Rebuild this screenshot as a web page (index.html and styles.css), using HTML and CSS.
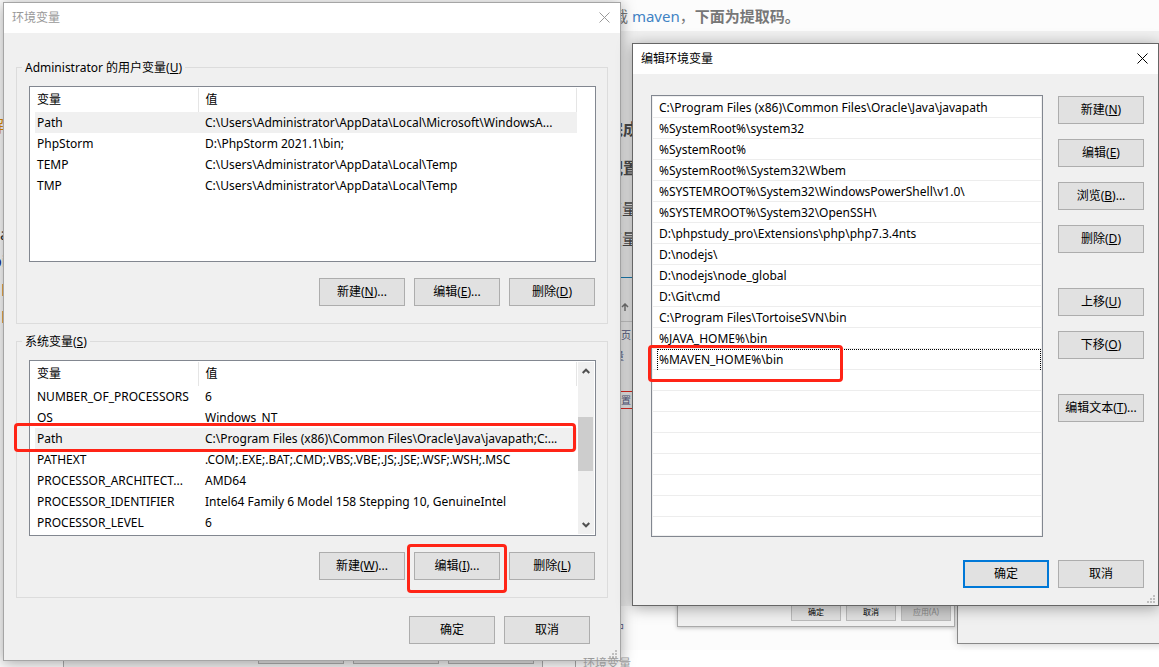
FILE: index.html
```html
<!DOCTYPE html>
<html lang="zh-CN">
<head>
    <meta charset="UTF-8">
    <meta name="viewport" content="width=device-width, initial-scale=1.0">
    <title>环境变量</title>
    <link rel="stylesheet" href="styles.css">
</head>
<body>

<div class="desktop">

    <!-- page behind the dialogs -->
    <div class="article">
        <p class="article-line intro">下载 <a href="#">maven</a>，<strong>下面为提取码。</strong></p>
        <div class="article-image"></div>
        <h3 class="article-line step-done">完成</h3>
        <h3 class="article-line step-config">配置</h3>
        <p class="article-line var-one">变量</p>
        <p class="article-line var-two">变量</p>
        <div class="shot-pane"></div>
        <svg class="shot-arrow" viewBox="0 0 8 8"><path d="M4 8V1M1 4l3-3 3 3" fill="none" stroke="#777" stroke-width="1.5"/></svg>
        <span class="article-line shot-text shot-home">主页</span>
        <span class="article-line shot-text shot-mark">量</span>
        <span class="article-line shot-text shot-setting">设置</span>
        <span class="article-line shot-text shot-tail">中</span>
        <span class="article-line left-note">解</span>
        <span class="article-line left-a">a</span>
        <span class="article-line left-bi">bi</span>
        <span class="article-line left-p1">P</span>
        <span class="article-line left-p2">P</span>
        <span class="article-line caption">环境变量</span>
        <div class="article-rule"></div>
    </div>

    <div class="back-window back-left"><i></i><i></i><i></i></div>
    <div class="back-window back-right"></div>
    <div class="back-window back-small">
        <button>确定</button>
        <button>取消</button>
        <button disabled>应用(A)</button>
    </div>

    <!-- 环境变量 -->
    <div class="dialog dialog-vars">
        <div class="title-bar">
            <span>环境变量</span>
            <button class="close" aria-label="关闭">
                <svg viewBox="0 0 11 11"><path d="M.5 .5l10 10M10.5 .5l-10 10"/></svg>
            </button>
        </div>
        <div class="dialog-body">
            <fieldset>
                <legend>Administrator 的用户变量(<u>U</u>)</legend>
                <div class="list-view">
                    <table>
                        <thead>
                            <tr><th class="col-name">变量</th><th>值</th></tr>
                        </thead>
                        <tbody>
                            <tr class="selected"><td>Path</td><td>C:\Users\Administrator\AppData\Local\Microsoft\WindowsA...</td></tr>
                            <tr><td>PhpStorm</td><td>D:\PhpStorm 2021.1\bin;</td></tr>
                            <tr><td>TEMP</td><td>C:\Users\Administrator\AppData\Local\Temp</td></tr>
                            <tr><td>TMP</td><td>C:\Users\Administrator\AppData\Local\Temp</td></tr>
                        </tbody>
                    </table>
                </div>
                <div class="button-row">
                    <button class="btn">新建(<u>N</u>)...</button>
                    <button class="btn">编辑(<u>E</u>)...</button>
                    <button class="btn">删除(<u>D</u>)</button>
                </div>
            </fieldset>

            <fieldset>
                <legend>系统变量(<u>S</u>)</legend>
                <div class="list-view">
                    <table>
                        <thead>
                            <tr><th class="col-name">变量</th><th>值</th></tr>
                        </thead>
                        <tbody>
                            <tr><td>NUMBER_OF_PROCESSORS</td><td>6</td></tr>
                            <tr><td>OS</td><td>Windows_NT</td></tr>
                            <tr class="selected"><td>Path</td><td>C:\Program Files (x86)\Common Files\Oracle\Java\javapath;C:...</td></tr>
                            <tr><td>PATHEXT</td><td>.COM;.EXE;.BAT;.CMD;.VBS;.VBE;.JS;.JSE;.WSF;.WSH;.MSC</td></tr>
                            <tr><td>PROCESSOR_ARCHITECT...</td><td>AMD64</td></tr>
                            <tr><td>PROCESSOR_IDENTIFIER</td><td>Intel64 Family 6 Model 158 Stepping 10, GenuineIntel</td></tr>
                            <tr><td>PROCESSOR_LEVEL</td><td>6</td></tr>
                        </tbody>
                    </table>
                    <div class="scrollbar">
                        <svg viewBox="0 0 8 6"><path d="M.7 5L4 1.7 7.3 5"/></svg>
                        <div class="thumb"></div>
                        <svg viewBox="0 0 8 6"><path d="M.7 1L4 4.3 7.3 1"/></svg>
                    </div>
                    <div class="mark mark-path"></div>
                </div>
                <div class="button-row">
                    <button class="btn">新建(<u>W</u>)...</button>
                    <div class="marked">
                        <button class="btn">编辑(<u>I</u>)...</button>
                        <div class="mark mark-edit"></div>
                    </div>
                    <button class="btn">删除(<u>L</u>)</button>
                </div>
            </fieldset>

            <div class="dialog-footer">
                <button class="btn">确定</button>
                <button class="btn">取消</button>
            </div>
        </div>
        <svg class="grip" viewBox="0 0 8 8"><path d="M6 0h2v2h-2zM3 3h2v2h-2zM6 3h2v2h-2zM0 6h2v2h-2zM3 6h2v2h-2zM6 6h2v2h-2z"/></svg>
    </div>

    <!-- 编辑环境变量 -->
    <div class="dialog dialog-edit">
        <div class="title-bar">
            <span>编辑环境变量</span>
            <button class="close" aria-label="关闭">
                <svg viewBox="0 0 11 11"><path d="M.5 .5l10 10M10.5 .5l-10 10"/></svg>
            </button>
        </div>
        <div class="dialog-body">
            <div class="edit-area">
                <ul class="path-list">
                    <li>C:\Program Files (x86)\Common Files\Oracle\Java\javapath</li>
                    <li>%SystemRoot%\system32</li>
                    <li>%SystemRoot%</li>
                    <li>%SystemRoot%\System32\Wbem</li>
                    <li>%SYSTEMROOT%\System32\WindowsPowerShell\v1.0\</li>
                    <li>%SYSTEMROOT%\System32\OpenSSH\</li>
                    <li>D:\phpstudy_pro\Extensions\php\php7.3.4nts</li>
                    <li>D:\nodejs\</li>
                    <li>D:\nodejs\node_global</li>
                    <li>D:\Git\cmd</li>
                    <li>C:\Program Files\TortoiseSVN\bin</li>
                    <li>%JAVA_HOME%\bin</li>
                    <li class="focused">%MAVEN_HOME%\bin<div class="mark mark-maven"></div></li>
                </ul>
                <div class="side-buttons">
                    <div class="side-group">
                        <button class="btn">新建(<u>N</u>)</button>
                        <button class="btn">编辑(<u>E</u>)</button>
                        <button class="btn">浏览(<u>B</u>)...</button>
                        <button class="btn">删除(<u>D</u>)</button>
                    </div>
                    <div class="side-group">
                        <button class="btn">上移(<u>U</u>)</button>
                        <button class="btn">下移(<u>O</u>)</button>
                    </div>
                    <div class="side-group">
                        <button class="btn">编辑文本(<u>T</u>)...</button>
                    </div>
                </div>
            </div>
            <div class="dialog-footer">
                <button class="btn btn-default">确定</button>
                <button class="btn">取消</button>
            </div>
        </div>
        <svg class="grip" viewBox="0 0 8 8"><path d="M6 0h2v2h-2zM3 3h2v2h-2zM6 3h2v2h-2zM0 6h2v2h-2zM3 6h2v2h-2zM6 6h2v2h-2z"/></svg>
    </div>

</div>

</body>
</html>
```
FILE: styles.css
```css
* {
    box-sizing: border-box;
}

body {
    margin: 0;
    font-family: "Noto Sans", "Noto Sans CJK SC", sans-serif;
    font-size: 12px;
    line-height: 20px;
    color: #000;
}

button {
    font: inherit;
    color: inherit;
    padding: 0;
}

.desktop {
    position: relative;
    height: 100vh;
    min-height: 667px;
    overflow: hidden;
    background: #fcfcfc;
}

/* page in the background */
.article-line {
    position: absolute;
    margin: 0;
    font-size: 16px;
    line-height: 24px;
    white-space: nowrap;
    color: #4d4d4d;
}

.intro {
    left: 598px;
    top: 4px;
    font-size: 15px;
    color: #777;
}

.intro a {
    color: #4183c4;
    text-decoration: none;
}

.article-image {
    position: absolute;
    left: 560px;
    right: 0;
    top: 31px;
    height: 575px;
    background: #f0f0f0;
}

.step-done,
.step-config {
    left: 607px;
}

.step-done {
    top: 117px;
}

.step-config {
    top: 156px;
}

.var-one,
.var-two {
    left: 606px;
}

.var-one {
    top: 197px;
}

.var-two {
    top: 227px;
}

.shot-pane {
    position: absolute;
    left: 600px;
    width: 50px;
    top: 277px;
    height: 45px;
    border-top: 1px solid #1a7fb5;
    border-bottom: 1px solid #ccc;
}

.shot-arrow {
    position: absolute;
    left: 621px;
    top: 303px;
    width: 8px;
    height: 8px;
}

.shot-text {
    font-size: 10px;
    line-height: 16px;
    color: #55597f;
}

.shot-home {
    left: 611px;
    top: 327px;
}

.shot-mark {
    left: 614px;
    top: 348px;
}

.shot-setting {
    left: 611px;
    top: 391px;
    width: 30px;
    border-top: 1px solid #e32b22;
    border-bottom: 1px solid #e32b22;
}

.shot-tail {
    left: 614px;
    top: 619px;
}

.left-note {
    left: -12px;
    top: 114px;
    color: #e08c00;
}

.left-a {
    left: 0;
    top: 222px;
    color: #333;
}

.left-bi {
    left: -8px;
    top: 249px;
    color: #1c1c7a;
}

.left-p1,
.left-p2 {
    left: 1px;
    color: #b5651d;
}

.left-p1 {
    top: 278px;
}

.left-p2 {
    top: 305px;
}

.caption {
    left: 583px;
    top: 652px;
    font-size: 12px;
    color: #999;
    z-index: 1;
}

.article-rule {
    position: absolute;
    left: 575px;
    top: 650px;
    right: 0;
    height: 20px;
    background: #fff;
    border-left: 1px solid #aaa;
}

/* windows that peep out from under the dialogs */
.back-window {
    position: absolute;
    background: #f0f0f0;
    border: 1px solid #aaa;
}

.back-left {
    left: 63px;
    width: 480px;
    top: 640px;
    height: 40px;
    display: flex;
    justify-content: flex-end;
    gap: 9px;
    padding-right: 8px;
}

.back-left i {
    width: 86px;
    height: 23px;
    border: 1px solid #adadad;
    background: #e1e1e1;
}

.back-right {
    left: 957px;
    right: -10px;
    top: 560px;
    height: 84px;
    border-color: #888;
    box-shadow: 0 0 8px rgba(0, 0, 0, 0.2);
}

.back-small {
    left: 677px;
    width: 278px;
    top: 580px;
    height: 47px;
    display: flex;
    justify-content: flex-end;
    align-items: flex-end;
    gap: 5px;
    padding: 0 3px 5px 0;
    box-shadow: 0 1px 4px rgba(0, 0, 0, 0.25);
}

.back-small button {
    width: 50px;
    height: 18px;
    border: 1px solid #bbb;
    background: #e1e1e1;
    font-size: 8px;
    line-height: 16px;
}

.back-small button:disabled {
    background: #ccc;
    color: #888;
}

/* dialogs */
.dialog {
    position: absolute;
    background: #f0f0f0;
    border: 1px solid #a5a5a5;
    box-shadow: 0 2px 14px rgba(0, 0, 0, 0.35);
}

.dialog-vars {
    left: 3px;
    right: 538px;
    top: 2px;
}

.dialog-edit {
    left: 632px;
    right: 0;
    top: 43px;
    border-color: #666;
}

.title-bar {
    display: flex;
    justify-content: space-between;
    align-items: center;
    height: 30px;
    padding: 0 10px 0 8px;
    background: #fff;
}

.dialog-vars .title-bar {
    color: #999;
}

.close {
    display: flex;
    padding-bottom: 2px;
    border: none;
    background: none;
}

.close svg {
    width: 11px;
    height: 11px;
    fill: none;
    stroke: currentColor;
}

.dialog-vars .dialog-body {
    padding: 23px 12px 16px;
}

fieldset {
    margin: 0 0 6px;
    padding: 8px 11px 17px 12px;
    border: 1px solid #dcdcdc;
    min-width: 0;
}

legend {
    margin-left: -7px;
    padding: 2px 3px 0;
    line-height: 20px;
}

.list-view {
    position: relative;
    display: flex;
    height: 176px;
    padding: 1px 1px 1px 5px;
    border: 1px solid #828790;
    background: #fff;
}

table {
    flex: 1;
    min-width: 0;
    margin-right: 17px;
    table-layout: fixed;
    border-collapse: collapse;
    align-self: flex-start;
}

.scrollbar {
    display: flex;
    flex-direction: column;
    align-items: center;
    justify-content: space-between;
    width: 16px;
    margin-left: -16px;
    padding: 6px 1px 6px 0;
    background: #f0f0f0;
}

.scrollbar svg {
    width: 8px;
    height: 6px;
    fill: none;
    stroke: #505050;
    stroke-width: 2;
}

.thumb {
    width: 15px;
    height: 54px;
    margin-bottom: 8px;
    background: #cdcdcd;
}

th {
    height: 24px;
    padding: 0 2px;
    font-weight: normal;
    text-align: left;
    border-right: 1px solid #e5e5e5;
}

.col-name {
    width: 163px;
}

td {
    height: 21px;
    padding: 0 2px;
    overflow: hidden;
    white-space: nowrap;
}

th + th,
td + td {
    padding-left: 7px;
}

.selected td {
    background: #f0f0f0;
}

.button-row {
    display: flex;
    justify-content: flex-end;
    gap: 9px;
    margin-top: 16px;
    padding-right: 1px;
}

.btn {
    width: 86px;
    height: 28px;
    border: 1px solid #adadad;
    background: #e1e1e1;
    white-space: nowrap;
}

.btn-default {
    border: 2px solid #0078d7;
}

.dialog-footer {
    display: flex;
    justify-content: flex-end;
    gap: 9px;
}

.dialog-vars .dialog-footer {
    padding: 12px 18px 0 0;
}

.dialog-edit .dialog-body {
    padding: 21px 14px 17px 18px;
}

.edit-area {
    display: flex;
    gap: 15px;
    margin-bottom: 23px;
}

.path-list {
    flex: 1;
    height: 442px;
    margin: 0;
    padding: 1px;
    list-style: none;
    border: 1px solid #828790;
    /* empty rows keep their grid lines */
    background: repeating-linear-gradient(#fff 0, #fff 20px, #ededed 20px, #ededed 21px) content-box #fff;
}

.path-list li {
    position: relative;
    height: 21px;
    padding-left: 6px;
    line-height: 22px;
}

.path-list .focused {
    margin-left: 4px;
    padding-left: 1px;
    border: 1px dotted #000;
    border-bottom: none;
    line-height: 20px;
}

.side-buttons {
    display: flex;
    flex-direction: column;
    gap: 35px;
    padding-top: 1px;
}

.side-group {
    display: flex;
    flex-direction: column;
    gap: 15px;
}

.grip {
    position: absolute;
    right: 3px;
    bottom: 2px;
    width: 8px;
    height: 8px;
    fill: #bfbfbf;
}

/* red highlight frames */
.marked {
    position: relative;
}

.mark {
    position: absolute;
    border: 3px solid #ff2416;
    border-radius: 4px;
    z-index: 1;
}

.mark-path {
    left: -16px;
    right: 19px;
    top: 62px;
    height: 29px;
}

.mark-edit {
    left: -7px;
    right: -7px;
    top: -8px;
    height: 49px;
}

.mark-maven {
    left: -10px;
    top: -5px;
    width: 195px;
    height: 37px;
}
```
